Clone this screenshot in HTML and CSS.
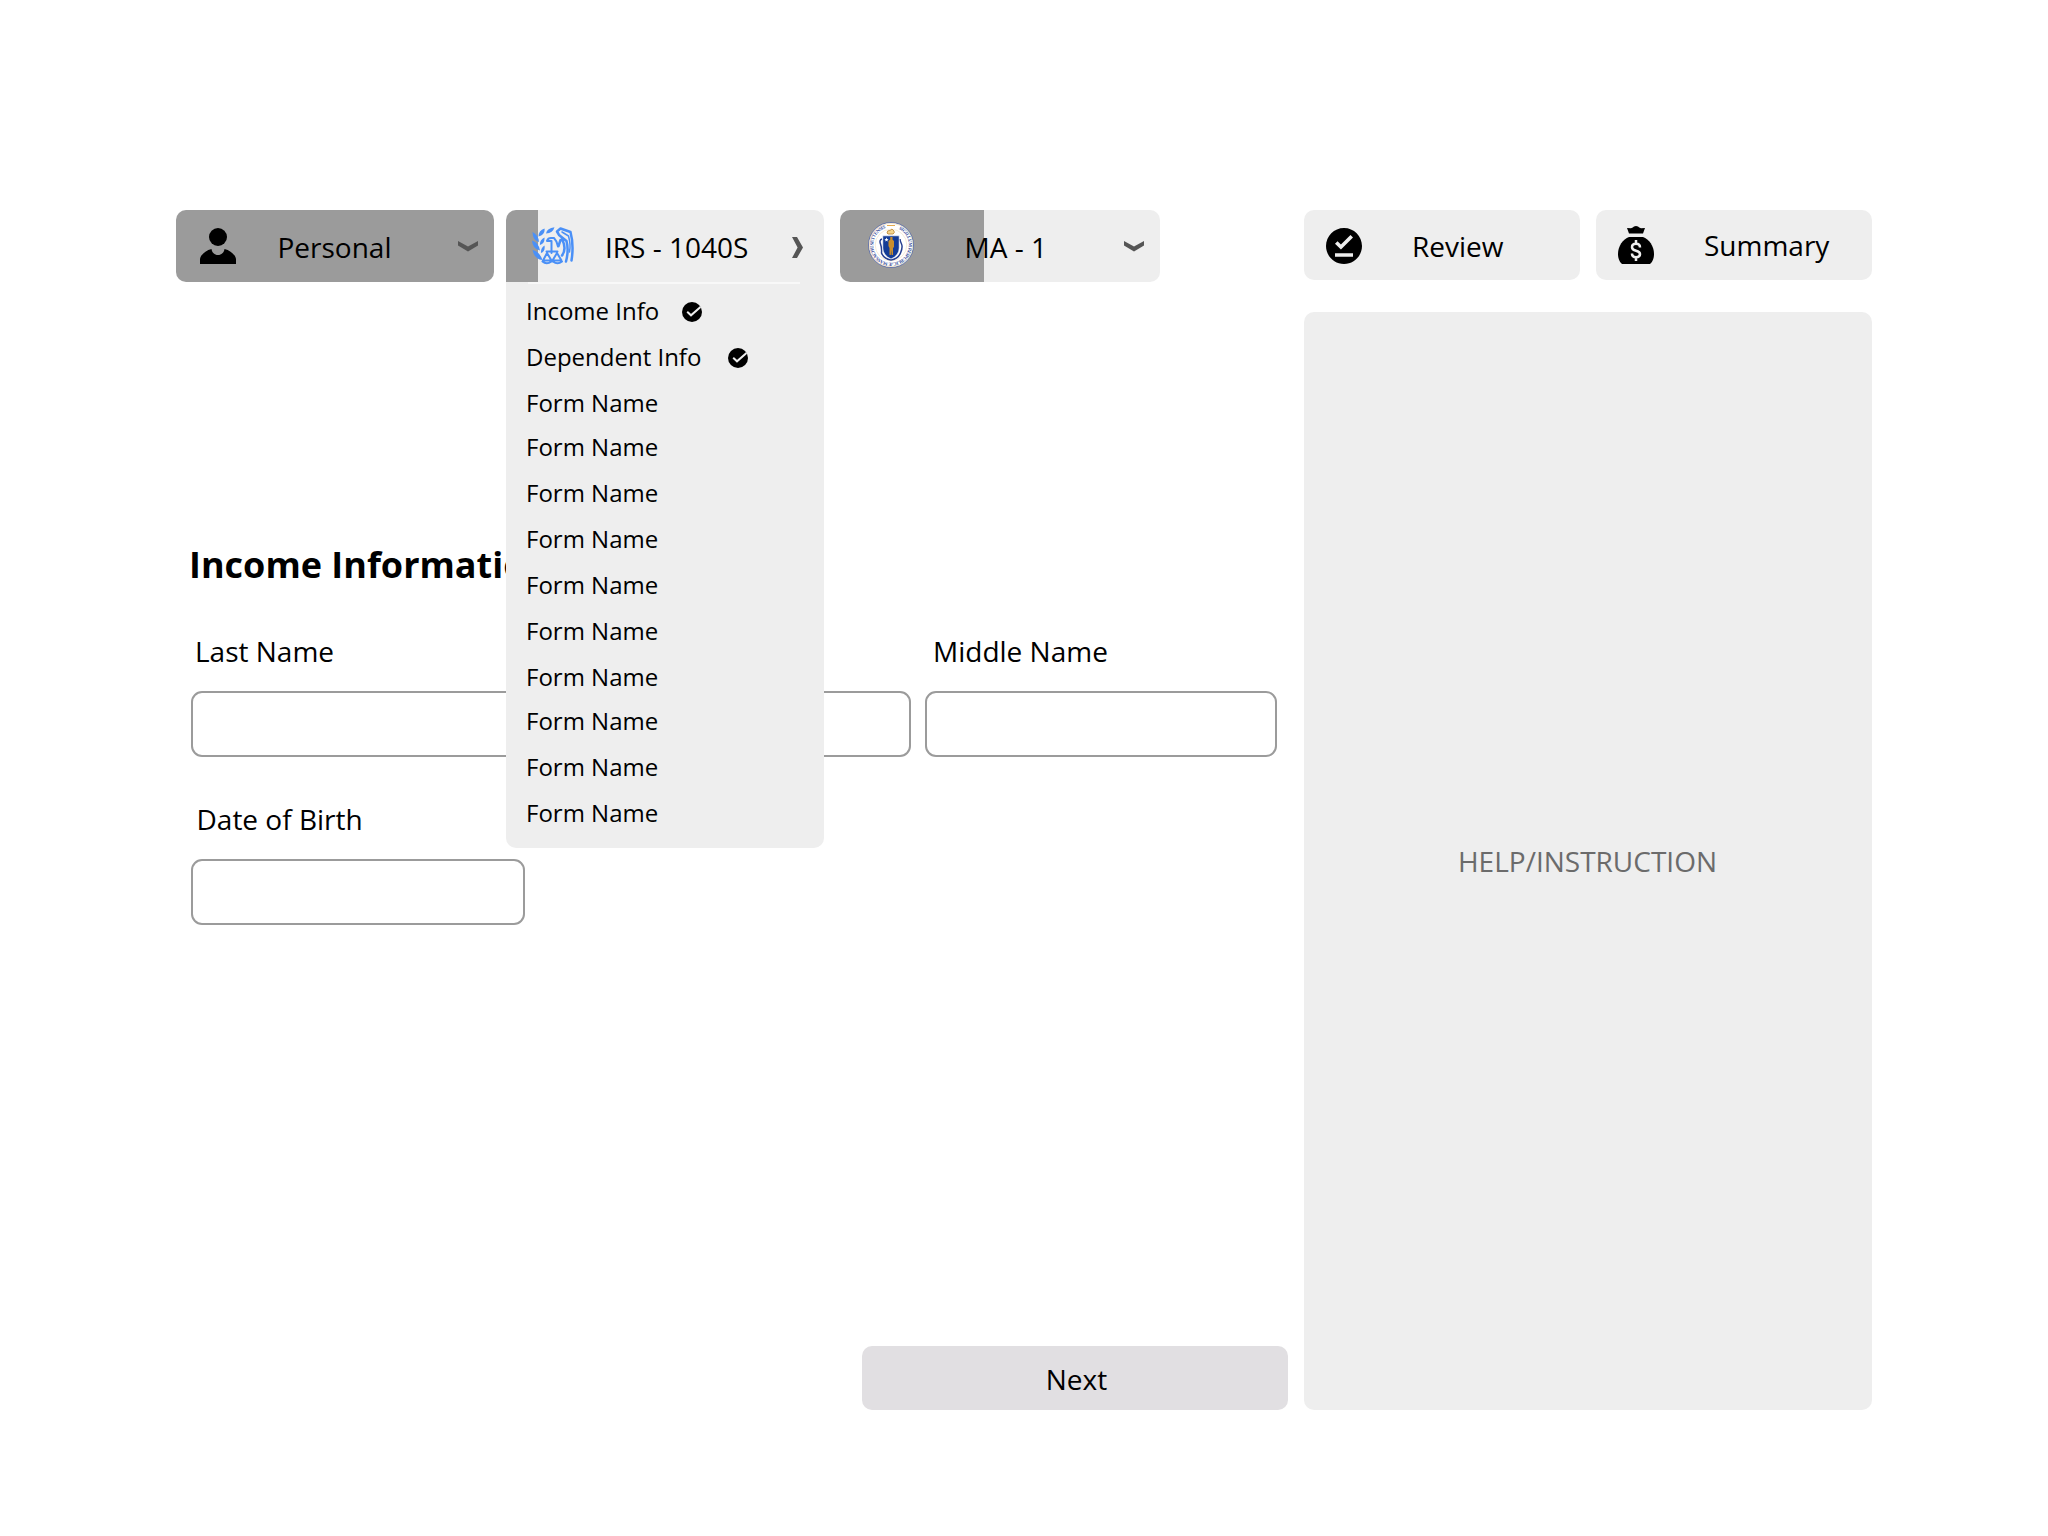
FILE: index.html
```html
<!DOCTYPE html>
<html lang="en">
<head>
<meta charset="utf-8">
<title>Income Information</title>
<link rel="stylesheet" href="styles.css">
</head>
<body>
<div class="page">
  <main class="main">
    <nav class="tabs">
      <div class="tab tab-personal" style="--done: 100%">
        <svg class="tab-icon" width="36" height="36" viewBox="0 0 36 36"><circle cx="18" cy="9" r="9"/><path d="M0 36V31C1 26 6 22.500 11.500 21C12 24.500 14.500 27 18 27S24 24.500 24.500 21C30 22.500 35 26 36 31V36Z"/></svg>
        <span class="tab-label">Personal</span>
        <svg class="chevron" width="20" height="11" viewBox="0 0 20 11"><path d="M0 0L10 5.600L20 0V4.400L10 10.600L0 4.400Z"/></svg>
      </div>
      <div class="tab tab-irs" style="--done: 32px">
        <svg class="tab-icon" width="42" height="38" viewBox="0 0 42 38" fill="none" stroke="#4a90f7" stroke-linecap="round" stroke-linejoin="round">
          <path fill="#4a90f7" stroke="none" d="M.5 5Q6.500 8 7 15Q.5 13 .5 5ZM0 13.500Q7 16 8 23.500Q.5 22 0 13.500ZM.5 23Q7.500 24.500 10.500 33Q2.500 32.500 .5 23ZM6.500 9.500Q6.500 3.500 12.500 1.500Q13.500 7.500 6.500 9.500ZM14 6.500Q15 1 22.500 .3Q21 6 14 6.500ZM8 18Q7.500 13 12.500 10.500Q13 16.500 8 18ZM9 26Q8.500 21 12.500 18.500Q13.500 24.500 9 26Z"/>
          <path stroke-width="2" d="M15 13.800Q16 11 19 11H22Q25 14 26 19.500M15 14H19.500V26M14.500 24.500H25.500M15 26L11 33.500H19.500L15 26M25 26L20.500 33.500H29.500L25 26M10.500 34.500Q14.500 38 19.500 34.500H21Q25.500 38 30 34.500"/>
          <path stroke-width="2.500" d="M26.500 7L25 4.500L28.500 1.500L38.500 5Q42 18 39.500 33.500M27 8L34.500 14Q37 23 34 34.500M30 12Q35 22 30 28.500M28.500 13L26.500 19"/>
          <path stroke-width="1.500" d="M30 5L36.500 9Q39 18 37.500 25"/>
        </svg>
        <span class="tab-label">IRS - 1040S</span>
        <svg class="chevron" width="11" height="21" viewBox="0 0 11 21"><path d="M0 0H5L11 10.500L5 21H0L5.600 10.500Z"/></svg>
        <ul class="menu">
          <li>Income Info <svg class="check" width="20" height="20" viewBox="0 0 20 20"><circle cx="10" cy="10" r="10"/><path d="M5.200 9.800L9 13.300L18.500 5"/></svg></li>
          <li>Dependent Info <svg class="check check-far" width="20" height="20" viewBox="0 0 20 20"><circle cx="10" cy="10" r="10"/><path d="M5.200 9.800L9 13.300L18.500 5"/></svg></li>
          <li>Form Name</li>
          <li class="tight">Form Name</li>
          <li>Form Name</li>
          <li>Form Name</li>
          <li>Form Name</li>
          <li>Form Name</li>
          <li>Form Name</li>
          <li class="tight">Form Name</li>
          <li>Form Name</li>
          <li>Form Name</li>
        </ul>
      </div>
      <div class="tab tab-ma" style="--done: 144px">
        <svg class="tab-icon" width="46" height="46" viewBox="0 0 46 46">
          <defs><path id="ring" d="M23 5.200A17.800 17.800 0 1 1 22.990 5.200"/></defs>
          <circle cx="23" cy="23" r="22.500" fill="#fff" stroke="#4a5fa5" stroke-width=".8"/>
          <circle cx="23" cy="23" r="21.500" fill="none" stroke="#f0d8ac" stroke-width=".6"/>
          <circle cx="23" cy="23" r="15.800" fill="none" stroke="#f2e2c8" stroke-width=".7"/>
          <text class="seal-text"><textPath href="#ring" startOffset="8" textLength="98">SIGILLUM REIPUBLICÆ MASSACHUSETTENSIS</textPath></text>
          <path d="M19 3.500H27" stroke="#e3a94e" stroke-width="1"/>
          <path d="M19 11Q19 8 22 8.500L24 7L26 9Q27 11 25 12H20Z" fill="#f4d58d" stroke="#b9822d" stroke-width=".8"/>
          <path d="M14 17Q11 18 12.500 22T13.500 31Q16 37 23 38Q30 37 32.500 31T33.500 22T32 17" fill="none" stroke="#263f91" stroke-width="1.500"/>
          <path d="M14.800 13.800H31.200V26Q31 33.500 23 37Q15 33.500 14.800 26Z" fill="#143c96" stroke="#fff" stroke-width=".6"/>
          <path d="M18.500 15.500l.6 1.400 1.500.1-1.200 1 .4 1.500-1.300-.8-1.300.8.4-1.500-1.200-1 1.500-.1Z" fill="#fff"/>
          <path d="M22.300 15H24.500V17.500L26 19V25L25 26V33H23.600L23.200 28L22.800 33H21.500V26L20.500 24V19L22.300 17.500Z" fill="#c98e2c"/>
        </svg>
        <span class="tab-label">MA - 1</span>
        <svg class="chevron" width="20" height="11" viewBox="0 0 20 11"><path d="M0 0L10 5.600L20 0V4.400L10 10.600L0 4.400Z"/></svg>
      </div>
    </nav>

    <form class="form">
      <h1>Income Information</h1>
      <div class="row">
        <label class="field field-last">Last Name<input type="text"></label>
        <div class="field field-first"><input type="text" aria-label="First Name"></div>
        <label class="field field-middle">Middle Name<input type="text"></label>
      </div>
      <div class="row row-birth">
        <label class="field field-birth">Date of Birth<input type="text"></label>
      </div>
      <button class="next" type="button">Next</button>
    </form>
  </main>

  <aside class="side">
    <div class="actions">
      <div class="action action-review">
        <svg width="36" height="36" viewBox="2 2 20 20"><path d="M12 2C6.500 2 2 6.500 2 12s4.500 10 10 10 10-4.500 10-10S17.500 2 12 2zm5 16H7v-2h10v2zm-6.700-4L7 10.700l1.400-1.400 1.900 1.900 5.300-5.300L17 7.300 10.300 14z"/></svg>
        <span>Review</span>
      </div>
      <div class="action action-summary">
        <svg width="36" height="38" viewBox="0 0 36 38">
          <path d="M9 2L13 2.200Q15 1.500 16 .5Q18 -.4 20 .5Q21 1.500 23 2.200L27 2L25 7.500H11Z"/>
          <path d="M11 11H25C31 13 36 20 36 28C36 33 34 36.500 32 38H4C2 36.500 0 33 0 28C0 20 5 13 11 11Z"/>
          <path d="M18 14V18M18 31V35M22 21.500C22 19 20.500 17.800 18 17.800S14 19 14 21.200C14 26 22 23.500 22 28C22 30 20.500 31.200 18 31.200S14 30 14 27.500" fill="none" stroke="#eee" stroke-width="2.500"/>
        </svg>
        <span>Summary</span>
      </div>
    </div>
    <section class="help">HELP/INSTRUCTION</section>
  </aside>
</div>
</body>
</html>
```
FILE: styles.css
```css
* {
  box-sizing: border-box;
}

body {
  margin: 0;
  background: #fff;
  color: #000;
  font: 28px/40px "Open Sans", "Noto Sans", sans-serif;
}

svg {
  display: block;
  flex: none;
}

.page {
  display: grid;
  grid-template-columns: 1112px 568px;
  gap: 16px;
  height: 1536px;
  padding: 210px 176px 126px;
}

.main,
.side {
  display: flex;
  flex-direction: column;
}

.tabs {
  display: flex;
}

.tab {
  position: relative;
  display: flex;
  align-items: center;
  width: 318px;
  height: 72px;
  border-radius: 10px;
  background: linear-gradient(#9b9b9b, #9b9b9b) 0 0 / var(--done) 100% no-repeat #eee;
}

.tab-label {
  padding-top: 2px;
  white-space: nowrap;
}

.chevron {
  margin-left: auto;
  fill: #555;
}

.tab-personal {
  padding: 0 16px 0 24px;
}

.tab-personal .tab-label {
  margin-left: 41.500px;
}

.tab-irs {
  margin-left: 12px;
  padding: 0 21px 0 26px;
  border-radius: 10px 10px 0 0;
}

.tab-irs .tab-label {
  margin-left: 31px;
}

.tab-irs .chevron {
  margin-top: 3px;
}

.tab-ma {
  width: 320px;
  margin-left: 16px;
  padding: 0 16px 0 28px;
}

.tab-ma .tab-icon {
  margin-bottom: 2px;
}

.tab-ma .tab-label {
  margin-left: 50.500px;
}

.seal-text {
  fill: #33499a;
  font: bold 4.800px "Liberation Serif", serif;
}

.menu {
  position: absolute;
  z-index: 2;
  top: 72px;
  left: 0;
  width: 318px;
  height: 566px;
  margin: 0;
  padding: 6px 20px 0;
  border-radius: 0 0 10px 10px;
  background: #eee;
  font-size: 24px;
  list-style: none;
}

.menu::before {
  content: "";
  position: absolute;
  top: 0;
  left: 22px;
  width: 272px;
  height: 2px;
  background: #f8f8f8;
}

.menu li {
  display: flex;
  align-items: center;
  height: 46px;
  line-height: 46px;
}

.menu .tight {
  margin-top: -2px;
}

.check {
  margin: 2px 0 0 22.700px;
}

.check-far {
  margin-left: 26.500px;
}

.check path {
  fill: none;
  stroke: #eee;
  stroke-width: 2;
}

.form {
  display: flex;
  flex: 1;
  flex-direction: column;
  padding-top: 258px;
}

h1 {
  margin: 0 0 0 13px;
  font-size: 36px;
  line-height: 50px;
}

.row {
  display: flex;
  gap: 14px;
  margin: 41px 0 0 15px;
}

.row-birth {
  margin-top: 42px;
}

.field {
  display: flex;
  flex-direction: column;
  justify-content: flex-end;
  gap: 20px;
  text-indent: 4px;
}

.field-last {
  width: 354px;
}

.field-first,
.field-middle {
  width: 352px;
}

.field-middle {
  text-indent: 8px;
}

.field-birth {
  width: 334px;
  text-indent: 5.500px;
}

input {
  width: 100%;
  height: 66px;
  border: 2px solid #9b9b9b;
  border-radius: 11px;
  background: #fff;
  font: inherit;
}

.next {
  width: 426px;
  height: 64px;
  margin: auto 0 0 686px;
  padding: 2px 0 0 3px;
  border: 0;
  border-radius: 10px;
  background: #e1dfe2;
  color: #000;
  font: inherit;
}

.actions {
  display: flex;
  gap: 16px;
}

.action {
  display: flex;
  align-items: center;
  width: 276px;
  height: 70px;
  padding-left: 22px;
  border-radius: 10px;
  background: #eee;
}

.action-review {
  padding-top: 1px;
}

.action span {
  margin-left: 50px;
}

.help {
  display: grid;
  flex: 1;
  place-items: center;
  margin-top: 32px;
  padding-right: 1px;
  border-radius: 10px;
  background: #eee;
  color: #6b6b6b;
}
```
